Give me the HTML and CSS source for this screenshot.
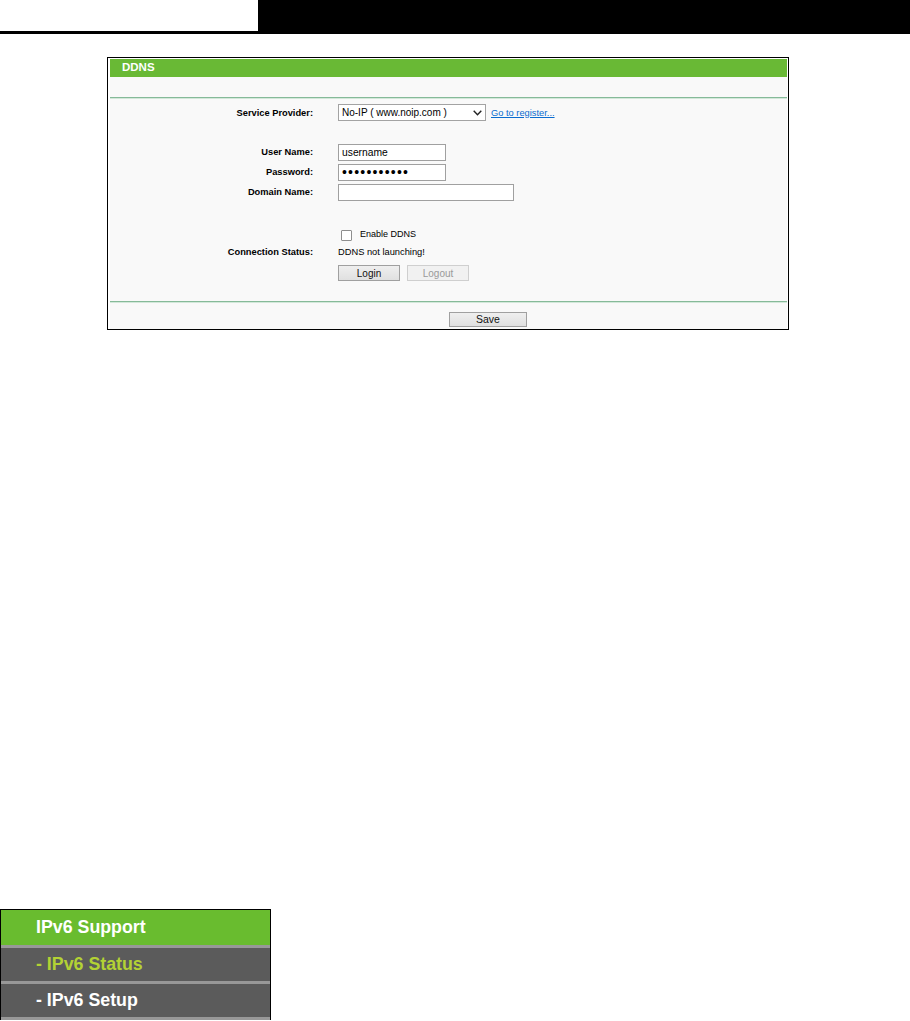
FILE: index.html
```html
<!DOCTYPE html>
<html lang="en">
<head>
  <meta charset="UTF-8">
  <title>DDNS</title>
  <link rel="stylesheet" href="styles.css">
</head>
<body>

<div class="doc-header">
  <div class="doc-header-left"></div>
  <div class="doc-header-right"></div>
</div>

<div class="panel">
  <div class="panel-inner">
    <div class="panel-title">DDNS</div>
    <div class="panel-gap"></div>
    <div class="rule"></div>

    <form class="form" onsubmit="return false;">
      <div class="row row-service">
        <label class="row-label">Service Provider:</label>
        <div class="select-wrap">
          <select class="select">
            <option>No-IP ( www.noip.com )</option>
            <option>Dyndns ( www.dyndns.com )</option>
          </select>
          <svg class="chev" width="9" height="6" viewBox="0 0 9 6">
            <polyline points="0.7,0.8 4.5,4.8 8.3,0.8" fill="none" stroke="#222" stroke-width="1.4"/>
          </svg>
        </div>
        <a href="#" class="reg-link">Go to register...</a>
      </div>

      <div class="row row-first">
        <label class="row-label">User Name:</label>
        <input type="text" class="input input-short" value="username">
      </div>
      <div class="row">
        <label class="row-label">Password:</label>
        <input type="password" class="input input-short input-pass" value="xxxxxxxxxxx">
      </div>
      <div class="row">
        <label class="row-label">Domain Name:</label>
        <input type="text" class="input input-long" value="">
      </div>

      <div class="row row-check">
        <span class="row-label"></span>
        <input type="checkbox" class="check" id="enableDdns">
        <label for="enableDdns" class="check-label">Enable DDNS</label>
      </div>
      <div class="row row-status">
        <span class="row-label">Connection Status:</span>
        <span class="status-text">DDNS not launching!</span>
      </div>
      <div class="row row-buttons">
        <span class="row-label"></span>
        <button type="button" class="btn">Login</button>
        <button type="button" class="btn btn-disabled" disabled>Logout</button>
      </div>
    </form>

    <div class="rule"></div>
    <div class="panel-foot">
      <button type="button" class="btn btn-save">Save</button>
    </div>
  </div>
</div>

<div class="side">
  <div class="side-item side-main">IPv6 Support</div>
  <div class="side-item side-active">- IPv6 Status</div>
  <div class="side-item">- IPv6 Setup</div>
</div>

</body>
</html>
```

FILE: styles.css
```css
* {
  box-sizing: border-box;
}

body {
  margin: 0;
  background-color: #fff;
  font-family: "Liberation Sans", Arial, sans-serif;
  color: #000;
}

/* Шапка документа */
.doc-header {
  display: flex;
  height: 34px;
}

.doc-header-left {
  width: 258px;
  border-bottom: 3px solid #000;
}

.doc-header-right {
  flex: 1;
  background-color: #000;
}

/* Панель DDNS */
.panel {
  margin: 23px 0 0 107px;
  width: 682px;
  height: 273px;
  border: 1px solid #000;
  padding: 1px 1px 0 2px;
  background-color: #fff;
}

.panel-inner {
  height: 100%;
  background-color: #f9f9f9;
}

.panel-title {
  height: 18px;
  padding-left: 12px;
  background-color: #69b935;
  color: #fff;
  font-weight: bold;
  font-size: 11.5px;
  line-height: 17px;
}

.panel-gap {
  height: 20px;
}

.rule {
  height: 2px;
  border-top: 1px solid #86ba99;
  background-color: #d3e8da;
}

.form {
  height: 202px;
  margin: 0;
  padding-top: 3px;
}

.row {
  display: flex;
  align-items: center;
  height: 20px;
  font-size: 9.3px;
}

.row-label {
  width: 203px;
  margin-right: 25px;
  text-align: right;
  font-weight: bold;
  flex-shrink: 0;
}

.row-service {
  height: 21px;
}

.row-first {
  margin-top: 19px;
}

.row-check {
  margin-top: 22px;
}

.row-status {
  height: 16px;
}

.row-buttons {
  height: 26px;
  align-items: flex-start;
  padding-top: 5px;
}

/* Поля ввода */
.select-wrap {
  position: relative;
  width: 148px;
  height: 17px;
}

.select {
  appearance: none;
  -webkit-appearance: none;
  width: 100%;
  height: 100%;
  margin: 0;
  padding: 0 0 0 3px;
  border: 1px solid #a3a3a3;
  border-radius: 0;
  background-color: #fff;
  font-family: inherit;
  font-size: 10px;
  color: #000;
}

.chev {
  position: absolute;
  right: 4px;
  top: 6px;
  pointer-events: none;
}

.reg-link {
  margin-left: 5px;
  color: #0a6ccf;
  font-size: 9.3px;
  text-decoration: underline;
}

.input {
  height: 17px;
  margin: 0;
  padding: 0 0 0 3px;
  border: 1px solid #a0a0a0;
  border-radius: 0;
  background-color: #fff;
  font-family: inherit;
  font-size: 10.3px;
  color: #000;
}

.input-short {
  width: 108px;
}

.input-long {
  width: 176px;
}

.input-pass {
  font-size: 14px;
  letter-spacing: 1.2px;
}

.check {
  appearance: none;
  -webkit-appearance: none;
  width: 11px;
  height: 11px;
  margin: 2px 0 0 3px;
  border: 1px solid #8e8e8e;
  border-radius: 1px;
  background-color: #fff;
}

.check-label {
  margin-left: 8px;
  font-size: 9px;
}

.status-text {
  font-size: 9.3px;
}

/* Кнопки */
.btn {
  width: 62px;
  height: 16px;
  margin: 0 7px 0 0;
  padding: 0;
  border: 1px solid #a0a0a0;
  border-radius: 0;
  background: linear-gradient(#efefef, #e0e0e0);
  font-family: inherit;
  font-size: 10px;
  color: #111;
}

.btn-disabled {
  border-color: #cfcfcf;
  background: #f1f1f1;
  color: #9a9a9a;
}

.panel-foot {
  height: 26px;
  padding: 6px 0 0 339px;
}

.btn-save {
  width: 78px;
  height: 15px;
  font-size: 10.5px;
}

/* Боковое меню */
.side {
  margin-top: 579px;
  width: 271px;
  border: 1px solid #000;
  border-bottom: none;
}

.side-item {
  height: 36px;
  padding-left: 35px;
  border-bottom: 3px solid #989898;
  background-color: #5b5b5b;
  color: #fff;
  font-weight: bold;
  font-size: 17.8px;
  line-height: 33px;
}

.side-main {
  height: 38px;
  line-height: 35px;
  background-color: #69bc2f;
}

.side-active {
  color: #b3d234;
}
```
